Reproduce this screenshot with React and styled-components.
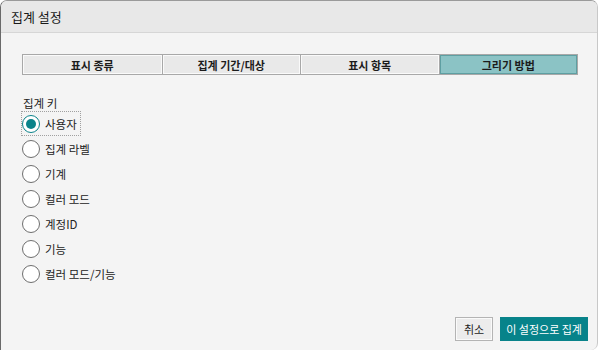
import React, { useState } from "react"
import styled, { createGlobalStyle } from "styled-components"

const GlobalStyle = createGlobalStyle`
  html, body {
    margin: 0;
    padding: 0;
    background: #ffffff;
  }
  body {
    font-family: "Noto Sans CJK KR", "Noto Sans", sans-serif;
    color: #222;
  }
`

/**
 * STYLES
 */
const Dialog = styled.div`
  box-sizing: border-box;
  width: 598px;
  height: 350px;
  background: #f4f4f4;
  border-left: 1px solid #6a6a6a;
  border-top: 1px solid #9a9a9a;
  border-right: 1px solid #c8c8c8;
  border-radius: 7px 7px 7px 0;
  display: flex;
  flex-direction: column;
  overflow: hidden;
`

const TitleBar = styled.div`
  height: 31px;
  background: #e8e8e8;
  border-bottom: 1px solid #d6d6d6;
  display: flex;
  align-items: center;
  padding-left: 10px;
  font-size: 13px;
  color: #1a1a1a;
`

const Body = styled.div`
  flex: 1;
  display: flex;
  flex-direction: column;
  padding: 21px 19px 9px 21px;
`

const Tabs = styled.div`
  display: grid;
  grid-template-columns: repeat(4, 1fr);
  border: 1px solid #a8a8a8;
  height: 21px;
  box-sizing: border-box;
`

const Tab = styled.button`
  border: none;
  border-left: ${p => (p.$first ? "none" : "1px solid #a8a8a8")};
  background: ${p => (p.$active ? "#8bc3c5" : "#e9e9e9")};
  box-shadow: ${p => (p.$active ? "inset 0 0 0 1px #5e9fa2" : "inset 0 0 0 1px #fafafa")};
  font-family: inherit;
  font-size: 11px;
  font-weight: 700;
  color: #1c1c1c;
  padding: 0;
  cursor: pointer;
`

const Group = styled.div`
  margin-top: 20px;
  display: flex;
  flex-direction: column;
  align-items: flex-start;
`

const GroupLabel = styled.div`
  font-size: 11.5px;
  color: #222;
  padding-left: 1px;
  margin-bottom: 0;
`

const Option = styled.label`
  box-sizing: border-box;
  display: flex;
  align-items: center;
  gap: 5px;
  height: 25px;
  padding: 0 3px 0 0;
  margin-left: -1px;
  font-size: 11.5px;
  color: #222;
  cursor: pointer;
  border: 1px dotted ${p => (p.$focused ? "#a0a0a0" : "transparent")};
`

const Circle = styled.span`
  box-sizing: border-box;
  width: 18px;
  height: 18px;
  border-radius: 50%;
  border: 1.5px solid ${p => (p.$checked ? "#0a838a" : "#6e6e6e")};
  background: #fff;
  display: flex;
  align-items: center;
  justify-content: center;

  &::after {
    content: "";
    width: 10px;
    height: 10px;
    border-radius: 50%;
    background: ${p => (p.$checked ? "#0a838a" : "transparent")};
  }
`

const Footer = styled.div`
  margin-top: auto;
  margin-right: -10px;
  display: flex;
  justify-content: flex-end;
  gap: 7px;
`

const Button = styled.button`
  height: 24px;
  padding: 0 ${p => (p.$primary ? "5px" : "8px")};
  font-family: inherit;
  font-size: 11px;
  border: 1px solid ${p => (p.$primary ? "#0a838a" : "#b4b4b4")};
  background: ${p => (p.$primary ? "#07838a" : "#ececec")};
  color: ${p => (p.$primary ? "#ffffff" : "#1c1c1c")};
  box-shadow: ${p => (p.$primary ? "none" : "inset 0 0 0 1px #fafafa")};
  cursor: pointer;
`

const TABS = ["표시 종류", "집계 기간/대상", "표시 항목", "그리기 방법"]
const KEYS = ["사용자", "집계 라벨", "기계", "컬러 모드", "계정ID", "기능", "컬러 모드/기능"]

export default function App() {
  const [tab, setTab] = useState(3)
  const [key, setKey] = useState(0)

  return (
    <>
      <GlobalStyle />
      <Dialog>
        <TitleBar>집계 설정</TitleBar>
        <Body>
          <Tabs>
            {TABS.map((t, i) => (
              <Tab key={t} $first={i === 0} $active={tab === i} onClick={() => setTab(i)}>
                {t}
              </Tab>
            ))}
          </Tabs>

          <Group>
            <GroupLabel>집계 키</GroupLabel>
            {KEYS.map((k, i) => (
              <Option key={k} $focused={key === i} onClick={() => setKey(i)}>
                <Circle $checked={key === i} />
                {k}
              </Option>
            ))}
          </Group>

          <Footer>
            <Button>취소</Button>
            <Button $primary>이 설정으로 집계</Button>
          </Footer>
        </Body>
      </Dialog>
    </>
  )
}
